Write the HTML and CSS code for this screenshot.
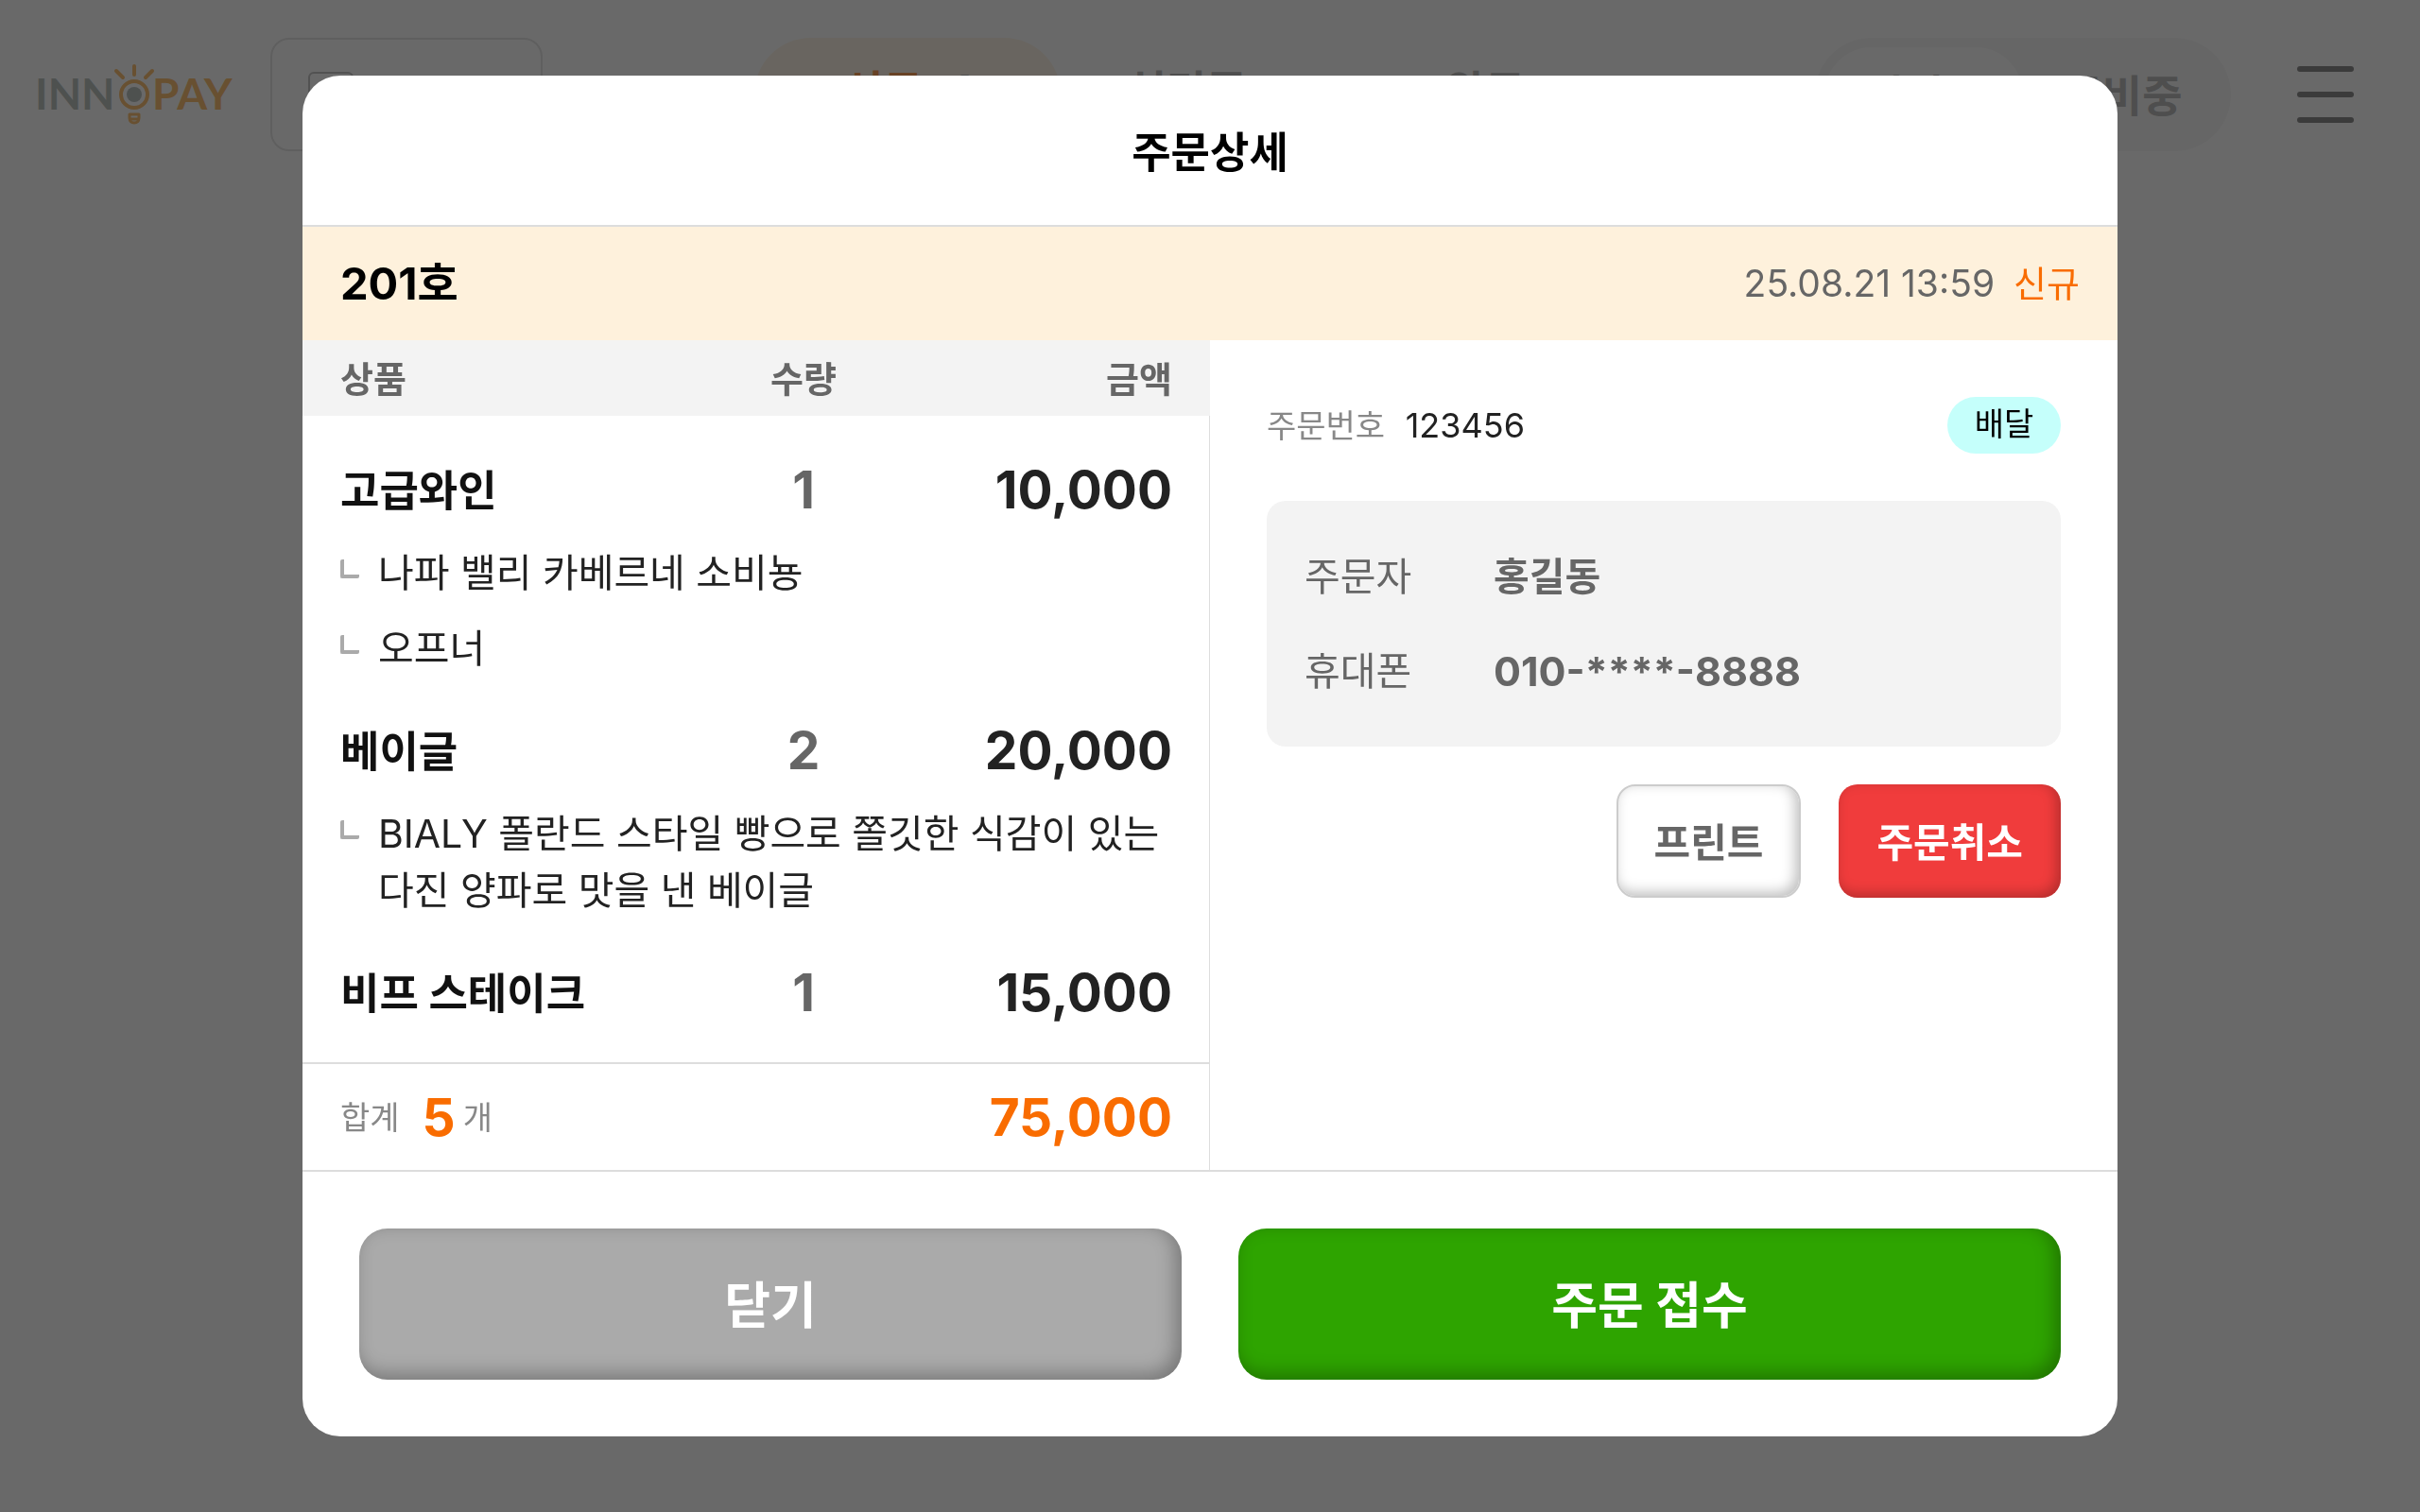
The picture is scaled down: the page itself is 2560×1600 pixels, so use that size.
FILE: index.html
```html
<!DOCTYPE html>
<html lang="ko">
<head>
    <meta charset="UTF-8">
    <meta name="viewport" content="width=device-width, initial-scale=1.0">
    <title>주문상세</title>
    <link rel="stylesheet" href="styles.css">
</head>
<body>
    <!-- Header -->
    <header class="header">
        <a href="#" class="logo" aria-label="INNOPAY">
            <svg width="206" height="80" viewBox="10 0 206 80">
                <text class="logo-inn" x="7" y="56">INN</text>
                <text class="logo-pay" x="131" y="56">PAY</text>
                <g fill="none" stroke="#f9a12d" stroke-width="4" stroke-linecap="round" stroke-linejoin="round">
                    <circle cx="112" cy="40" r="14"/>
                    <path d="M112 10v9M93 15l7 7M131 15l-7 7"/>
                    <path d="M107 61h10v4c0 3-2 5-5 5s-5-2-5-5zM108 66h8" stroke-width="3"/>
                </g>
                <circle cx="112" cy="40" r="8" fill="#9aa49f"/>
            </svg>
        </a>
        <button type="button" class="store-btn" aria-label="매장">
            <span class="store-icon"></span>
        </button>
        <nav class="tabs">
            <a href="#" class="tab active">신규 <span>1</span></a>
            <a href="#" class="tab">처리중</a>
            <a href="#" class="tab">완료</a>
        </nav>
        <div class="state">
            <button type="button" class="state-btn on">영업중</button>
            <button type="button" class="state-btn">준비중</button>
        </div>
        <button type="button" class="menu-btn" aria-label="메뉴">
            <span></span>
            <span></span>
            <span></span>
        </button>
    </header>

    <!-- Order Detail Popup -->
    <div class="dim">
        <div class="popup" role="dialog" aria-labelledby="popup-title">
            <h1 class="popup-title" id="popup-title">주문상세</h1>

            <div class="room-bar">
                <h2>201호</h2>
                <p class="room-info"><span class="date">25.08.21 13:59</span><span class="new">신규</span></p>
            </div>

            <div class="popup-body">
                <!-- Items -->
                <section class="order-list">
                    <table>
                        <thead>
                            <tr>
                                <th class="name">상품</th>
                                <th class="qty">수량</th>
                                <th class="price">금액</th>
                            </tr>
                        </thead>
                        <tbody>
                            <tr class="item">
                                <td class="name">고급와인</td>
                                <td class="qty">1</td>
                                <td class="price">10,000</td>
                            </tr>
                            <tr>
                                <td colspan="3">
                                    <ul class="options">
                                        <li>나파 밸리 카베르네 소비뇽</li>
                                        <li>오프너</li>
                                    </ul>
                                </td>
                            </tr>
                            <tr class="item">
                                <td class="name">베이글</td>
                                <td class="qty">2</td>
                                <td class="price">20,000</td>
                            </tr>
                            <tr>
                                <td colspan="3">
                                    <ul class="options">
                                        <li>BIALY 폴란드 스타일 빵으로 쫄깃한 식감이 있는 다진 양파로 맛을 낸 베이글</li>
                                    </ul>
                                </td>
                            </tr>
                            <tr class="item">
                                <td class="name">비프 스테이크</td>
                                <td class="qty">1</td>
                                <td class="price">15,000</td>
                            </tr>
                        </tbody>
                    </table>
                    <div class="total">
                        <p class="total-count"><span>합계</span> <strong>5</strong> <span>개</span></p>
                        <strong>75,000</strong>
                    </div>
                </section>

                <!-- Customer -->
                <section class="order-info">
                    <div class="order-number">
                        <p>주문번호 <span>123456</span></p>
                        <span class="badge">배달</span>
                    </div>
                    <dl class="customer">
                        <dt>주문자</dt>
                        <dd>홍길동</dd>
                        <dt>휴대폰</dt>
                        <dd class="phone">010-****-8888</dd>
                    </dl>
                    <div class="order-btns">
                        <button type="button" class="btn btn-print">프린트</button>
                        <button type="button" class="btn btn-cancel">주문취소</button>
                    </div>
                </section>
            </div>

            <div class="popup-footer">
                <button type="button" class="btn-large btn-close">닫기</button>
                <button type="button" class="btn-large btn-accept">주문 접수</button>
            </div>
        </div>
    </div>
</body>
</html>
```
FILE: styles.css
```css
/* General Styles */
*,
*::before {
    box-sizing: border-box;
    margin: 0;
    padding: 0;
}

body {
    font-family: Inter, "Noto Sans CJK KR", sans-serif;
    background: #fff;
    color: #222;
}

button {
    border: 0;
    background: none;
    font-family: inherit;
    cursor: pointer;
}

a {
    color: inherit;
    text-decoration: none;
}

/* Header */
.header {
    display: flex;
    align-items: center;
    height: 200px;
    padding: 0 70px 0 40px;
}

.logo svg {
    display: block;
    overflow: visible;
}

.logo text {
    font-family: Lato, sans-serif;
    font-size: 46px;
    font-weight: 700;
}

.logo-inn {
    fill: #9aa49f;
}

.logo-pay {
    fill: #f9a12d;
}

.store-btn {
    width: 288px;
    height: 120px;
    margin-left: 40px;
    padding-left: 38px;
    border: 2px solid #d9d9d9;
    border-radius: 20px;
}

.store-icon {
    display: block;
    width: 48px;
    height: 48px;
    border: 2px solid #a8a8a8;
    border-radius: 6px;
}

.tabs {
    display: grid;
    grid-template-columns: 324px 266px 366px;
    margin-left: 224px;
    font-size: 46px;
    font-weight: 700;
    line-height: 112px;
    text-align: center;
    color: #999;
}

.tab {
    height: 120px;
}

.tab.active {
    border-radius: 60px;
    background: #fef1dc;
    color: #f96c00;
}

.tab.active span {
    margin-left: 20px;
    color: #999;
}

.state {
    display: flex;
    margin-left: auto;
    padding: 10px;
    border-radius: 60px;
    background: #f3f3f3;
}

.state-btn {
    width: 210px;
    height: 100px;
    padding-bottom: 4px;
    border-radius: 50px;
    color: #999;
    font-size: 46px;
    font-weight: 700;
}

.state-btn.on {
    background: #fff;
    color: #777;
}

.menu-btn {
    display: flex;
    flex-direction: column;
    justify-content: space-between;
    width: 60px;
    height: 60px;
    margin-left: 70px;
}

.menu-btn span {
    height: 6px;
    border-radius: 3px;
    background: #555;
}

/* Popup */
.dim {
    position: fixed;
    inset: 0;
    display: flex;
    align-items: center;
    justify-content: center;
    background: rgba(51, 51, 51, 0.735);
}

.popup {
    display: flex;
    flex-direction: column;
    width: 75%;
    height: 90%;
    border-radius: 40px;
    background: #fff;
    overflow: hidden;
}

.popup-title {
    height: 160px;
    border-bottom: 2px solid #ddd;
    color: #000;
    font-size: 45px;
    line-height: 164px;
    text-align: center;
}

.room-bar {
    display: flex;
    align-items: center;
    justify-content: space-between;
    height: 120px;
    padding: 0 40px;
    background: #fef1dc;
}

.room-bar h2 {
    color: #000;
    font-size: 47px;
    line-height: 60px;
}

.room-info {
    display: flex;
    align-items: baseline;
    gap: 20px;
    color: #666;
    font-size: 39px;
    line-height: 60px;
}

.room-info .new {
    color: #f96c00;
    font-size: 38px;
}

.popup-body {
    display: grid;
    grid-template-columns: 1fr 1fr;
    flex: 1;
    min-height: 0;
}

/* Items */
.order-list {
    display: flex;
    flex-direction: column;
    box-shadow: inset -1px 0 #ddd;
}

.order-list table {
    width: 100%;
    border-spacing: 0;
    table-layout: fixed;
}

.order-list th {
    height: 80px;
    padding-bottom: 4px;
    background: #f3f3f3;
    color: #666;
    font-size: 38px;
}

.order-list .name {
    padding-left: 40px;
    text-align: left;
}

.order-list .qty {
    width: 180px;
    text-align: center;
}

.order-list .price {
    width: 340px;
    padding-right: 40px;
    text-align: right;
}

.item td {
    padding-top: 40px;
    line-height: 76px;
    font-size: 55px;
    font-weight: 700;
}

.item td.name {
    padding-top: 44px;
    line-height: 72px;
    color: #111;
    font-size: 45px;
}

.item td.qty {
    color: #666;
}

.options {
    padding: 0 40px;
    list-style: none;
}

.options li {
    display: flex;
    gap: 20px;
    margin-top: 20px;
    font-size: 41px;
    line-height: 60px;
}

.options li::before {
    content: '';
    flex-shrink: 0;
    width: 20px;
    height: 20px;
    margin-top: 16px;
    border-left: 4px solid #aaa;
    border-bottom: 4px solid #aaa;
    border-radius: 2px;
}

.total {
    display: flex;
    align-items: center;
    justify-content: space-between;
    height: 114px;
    margin: auto 1px 0 0;
    padding: 0 39px 0 40px;
    border-top: 2px solid #ddd;
}

.total strong {
    color: #f96c00;
    font-size: 55px;
}

.total-count {
    display: flex;
    align-items: center;
    gap: 8px;
    color: #888;
    font-size: 34px;
}

.total-count span {
    padding-bottom: 4px;
}

.total-count strong {
    margin-left: 16px;
}

/* Customer */
.order-info {
    padding: 60px;
}

.order-number {
    display: flex;
    align-items: center;
    justify-content: space-between;
    height: 60px;
    color: #888;
    font-size: 34px;
    line-height: 58px;
}

.order-number p span {
    margin-left: 12px;
    color: #222;
    font-size: 36px;
}

.badge {
    width: 120px;
    height: 60px;
    border-radius: 30px;
    background: #c5fffb;
    color: #000;
    text-align: center;
}

.customer {
    display: grid;
    grid-template-columns: 200px 1fr;
    row-gap: 40px;
    margin-top: 50px;
    padding: 50px 40px;
    border-radius: 20px;
    background: #f3f3f3;
    color: #666;
    font-size: 41px;
    line-height: 60px;
}

.customer dd {
    font-weight: 700;
}

.customer .phone {
    font-size: 43px;
}

.order-btns {
    display: flex;
    justify-content: flex-end;
    gap: 40px;
    margin-top: 40px;
}

.btn {
    height: 120px;
    padding: 0 40px 4px;
    border-radius: 20px;
    font-size: 42px;
    font-weight: 700;
    box-shadow: inset -4px -4px 14px rgba(0, 0, 0, 0.25);
}

.btn-print {
    padding: 0 38px 4px;
    border: 2px solid #ccc;
    background: #fff;
    color: #666;
}

.btn-cancel {
    background: #f03c3c;
    color: #fff;
}

/* Footer */
.popup-footer {
    display: grid;
    grid-template-columns: 1fr 1fr;
    gap: 60px;
    padding: 60px;
    border-top: 2px solid #ddd;
}

.btn-large {
    height: 160px;
    padding-bottom: 4px;
    border-radius: 30px;
    color: #fff;
    font-size: 53px;
    font-weight: 700;
    box-shadow: inset -6px -6px 20px rgba(0, 0, 0, 0.3);
}

.btn-close {
    background: #aaa;
}

.btn-accept {
    background: #2ea400;
}
```
